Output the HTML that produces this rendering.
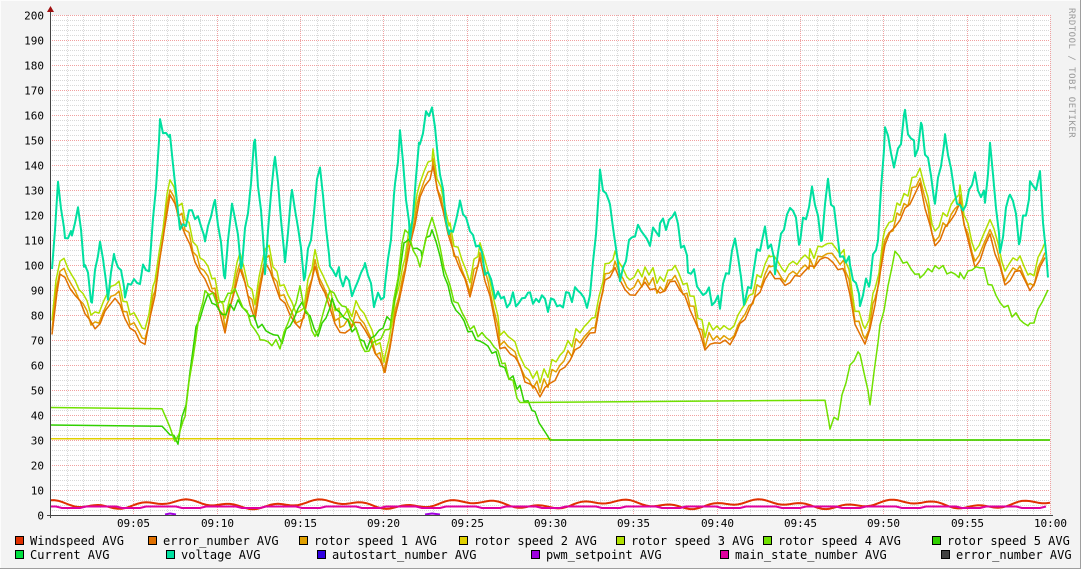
<!DOCTYPE html>
<html><head><meta charset="utf-8">
<style>
html,body{margin:0;padding:0;background:#f3f3f3;}
body{width:1081px;height:569px;overflow:hidden;position:relative;font-family:"DejaVu Sans Mono","Liberation Mono",monospace;}
svg{position:absolute;left:0;top:0;}
</style></head><body>
<svg id="g" width="1081" height="569" xmlns="http://www.w3.org/2000/svg" font-family="DejaVu Sans Mono, Liberation Mono, monospace">
<rect x="0" y="0" width="1081" height="569" fill="#f3f3f3"/>
<rect x="0.5" y="0.5" width="1080" height="568" fill="none" stroke="#fcfcfc"/>
<line x1="1080.5" y1="0" x2="1080.5" y2="569" stroke="#9e9e9e"/>
<line x1="0" y1="568.5" x2="1081" y2="568.5" stroke="#9e9e9e"/>
<rect x="50" y="15" width="1000" height="500" fill="#ffffff"/>
<g id="grid"></g>
<g id="lines" fill="none" stroke-width="2" stroke-linejoin="round"></g>
<line x1="50.5" y1="10" x2="50.5" y2="518" stroke="#444"/>
<line x1="47" y1="515.5" x2="1053" y2="515.5" stroke="#444"/>
<polygon points="47,12 54,12 50.5,6" fill="#a01010"/>
<g id="labels" font-size="11" fill="#000"></g>
<text x="1069" y="8" font-size="9" fill="#999" transform="rotate(90 1069 8)" letter-spacing="0.5">RRDTOOL / TOBI OETIKER</text>
<g id="legend" font-size="12" fill="#000"></g>
</svg>
<script>
var NS="http://www.w3.org/2000/svg";
function el(p,n,a,t){var e=document.createElementNS(NS,n);for(var k in a)e.setAttribute(k,a[k]);if(t!=null)e.textContent=t;p.appendChild(e);return e;}
var grid=document.getElementById('grid'),lab=document.getElementById('labels'),lines=document.getElementById('lines'),leg=document.getElementById('legend');
var px=1000/60;
for(var i=0;i<=100;i++){var y=515-i*5+0.5;if(i%5)el(grid,'line',{x1:50,x2:1050,y1:y,y2:y,stroke:'#d8d8d8','stroke-dasharray':'1,1'});}
for(var m=0;m<=60;m++){var x=Math.round(50+m*px)+0.5;if(m%5)el(grid,'line',{x1:x,x2:x,y1:15,y2:515,stroke:'#d8d8d8','stroke-dasharray':'1,1'});}
for(var i=0;i<=20;i++){var y=515-i*25+0.5;el(grid,'line',{x1:50,x2:1050,y1:y,y2:y,stroke:'#f0a0a0','stroke-dasharray':'1,1'});el(lab,'text',{x:44,y:y+4,'text-anchor':'end'},String(i*10));}
var tl=['09:05','09:10','09:15','09:20','09:25','09:30','09:35','09:40','09:45','09:50','09:55','10:00'];
for(var k=0;k<12;k++){var x=Math.round(50+(5+k*5)*px)+0.5;el(grid,'line',{x1:x,x2:x,y1:15,y2:515,stroke:'#f0a0a0','stroke-dasharray':'1,1'});el(lab,'text',{x:x,y:527,'text-anchor':'middle'},tl[k]);}
function Y(v){return 515-2.5*v;}
function poly(arr,col,w){var s=[];for(var i=0;i<arr.length;i+=2)s.push(arr[i]+','+Y(arr[i+1]).toFixed(1));el(lines,'polyline',{points:s.join(' '),stroke:col,'stroke-width':w||2});}
function wob(arr,amp,step){var out=[];for(var i=0;i<arr.length-2;i+=2){var x0=arr[i],v0=arr[i+1],x1=arr[i+2],v1=arr[i+3];if(v0==v1){out.push(x0,v0);continue;}for(var x=x0;x<x1;x+=step){var t=(x-x0)/(x1-x0);out.push(x,v0+(v1-v0)*t+amp*Math.sin(x*1.7)*Math.cos(x*0.9));}}out.push(arr[arr.length-2],arr[arr.length-1]);return out;}
var volt=[52,100,58,132,65,110,72,112,78,122,85,100,92,86,100,110,108,90,115,105,125,90,140,95,150,100,160,155,170,152,180,115,195,122,205,110,215,125,225,95,232,125,242,100,255,150,265,100,275,145,285,100,292,130,305,95,320,140,330,100,340,95,355,90,365,100,375,85,385,90,395,130,400,155,410,110,420,150,432,165,440,135,450,110,460,125,470,115,485,100,495,88,510,85,530,87,560,84,575,90,590,85,600,135,610,125,620,95,635,115,650,110,660,115,675,120,688,100,700,90,720,85,735,110,745,85,765,115,775,100,790,125,800,110,812,130,822,110,828,135,840,105,850,100,860,85,870,95,878,110,885,155,895,140,905,160,915,145,922,155,935,125,945,150,960,120,975,135,985,125,990,150,1000,105,1010,130,1020,110,1030,130,1040,135,1048,95];
var rot=[52,75,60,100,75,90,95,75,115,90,130,78,145,70,155,90,170,130,185,115,200,100,215,90,225,75,240,100,255,80,265,105,280,90,300,75,315,100,340,75,360,80,385,58,395,80,405,100,420,130,433,140,450,110,470,90,480,105,490,90,500,70,515,65,525,55,540,50,560,60,580,70,595,75,605,95,615,100,630,90,645,95,660,90,675,95,690,85,705,70,720,72,730,70,745,80,770,100,785,95,810,100,828,105,845,100,855,80,865,70,875,85,885,110,900,120,920,135,935,110,960,125,975,100,990,115,1005,95,1020,100,1030,90,1045,105];
var grn=[50,43,162,43,170,35,175,28,185,40,195,70,205,90,220,85,235,90,260,70,280,68,300,90,315,70,330,90,350,80,365,65,390,75,405,115,420,100,432,120,450,90,470,75,490,70,505,60,520,45,825,45,830,35,838,40,850,60,860,65,870,45,880,75,895,105,920,95,935,100,960,95,980,100,1000,85,1030,75,1048,90];
var grn2=[50,36,162,36,170,32,178,30,186,45,196,75,208,88,222,80,238,85,262,75,282,70,302,85,318,72,332,85,352,75,367,68,392,80,405,110,422,105,432,115,452,85,472,72,492,66,505,58,520,50,535,40,550,30,1050,30];
poly([50,30.5,550,30.5,552,30,1050,30],'#e0d000',1.5);
poly(wob(rot,3,4).map(function(v,i){return i%2?v+4:v;}),'#b0e000',1.5);
poly(wob(rot,3,4),'#e0a000',1.5);
poly(wob(rot,2,5).map(function(v,i){return i%2?v-2:v;}),'#e07000',1.5);
poly(wob(grn2,2,4),'#30d000',1.5);
poly(wob(grn,2,4),'#70e000',1.5);
poly(wob(volt,4,3),'#00e0a0',2);
var ws=[];for(var x=50;x<=1050;x+=4){ws.push(x,4.3+1.2*Math.sin(x/23)+0.8*Math.sin(x/7));}
poly(ws,'#e03000',2);
var ms=[];for(var x=50;x<=1050;x+=6){ms.push(x,x%60<25?2.8:3.4);}
poly(ms,'#e000a0',2);
poly([165,0.2,170,0.6,176,0.2],'#a000e0',2);poly([425,0.2,432,0.6,440,0.2],'#a000e0',2);
var L=[[15,541,'#e03000','Windspeed AVG'],[148,541,'#e07000','error_number AVG'],[299,541,'#e0a000','rotor speed 1 AVG'],[459,541,'#e0d000','rotor speed 2 AVG'],[616,541,'#b0e000','rotor speed 3 AVG'],[763,541,'#70e000','rotor speed 4 AVG'],[932,541,'#30d000','rotor speed 5 AVG'],
[15,555,'#00e040','Current AVG'],[166,555,'#00e0a0','voltage AVG'],[317,555,'#3000e0','autostart_number AVG'],[531,555,'#a000e0','pwm_setpoint AVG'],[720,555,'#e000a0','main_state_number AVG'],[941,555,'#404040','error_number AVG']];
L.forEach(function(a){el(leg,'rect',{x:a[0]+0.5,y:a[1]-4.5,width:8,height:8,fill:a[2],stroke:'#000'});el(leg,'text',{x:a[0]+15,y:a[1]+4},a[3]);});
</script>
</body></html>
